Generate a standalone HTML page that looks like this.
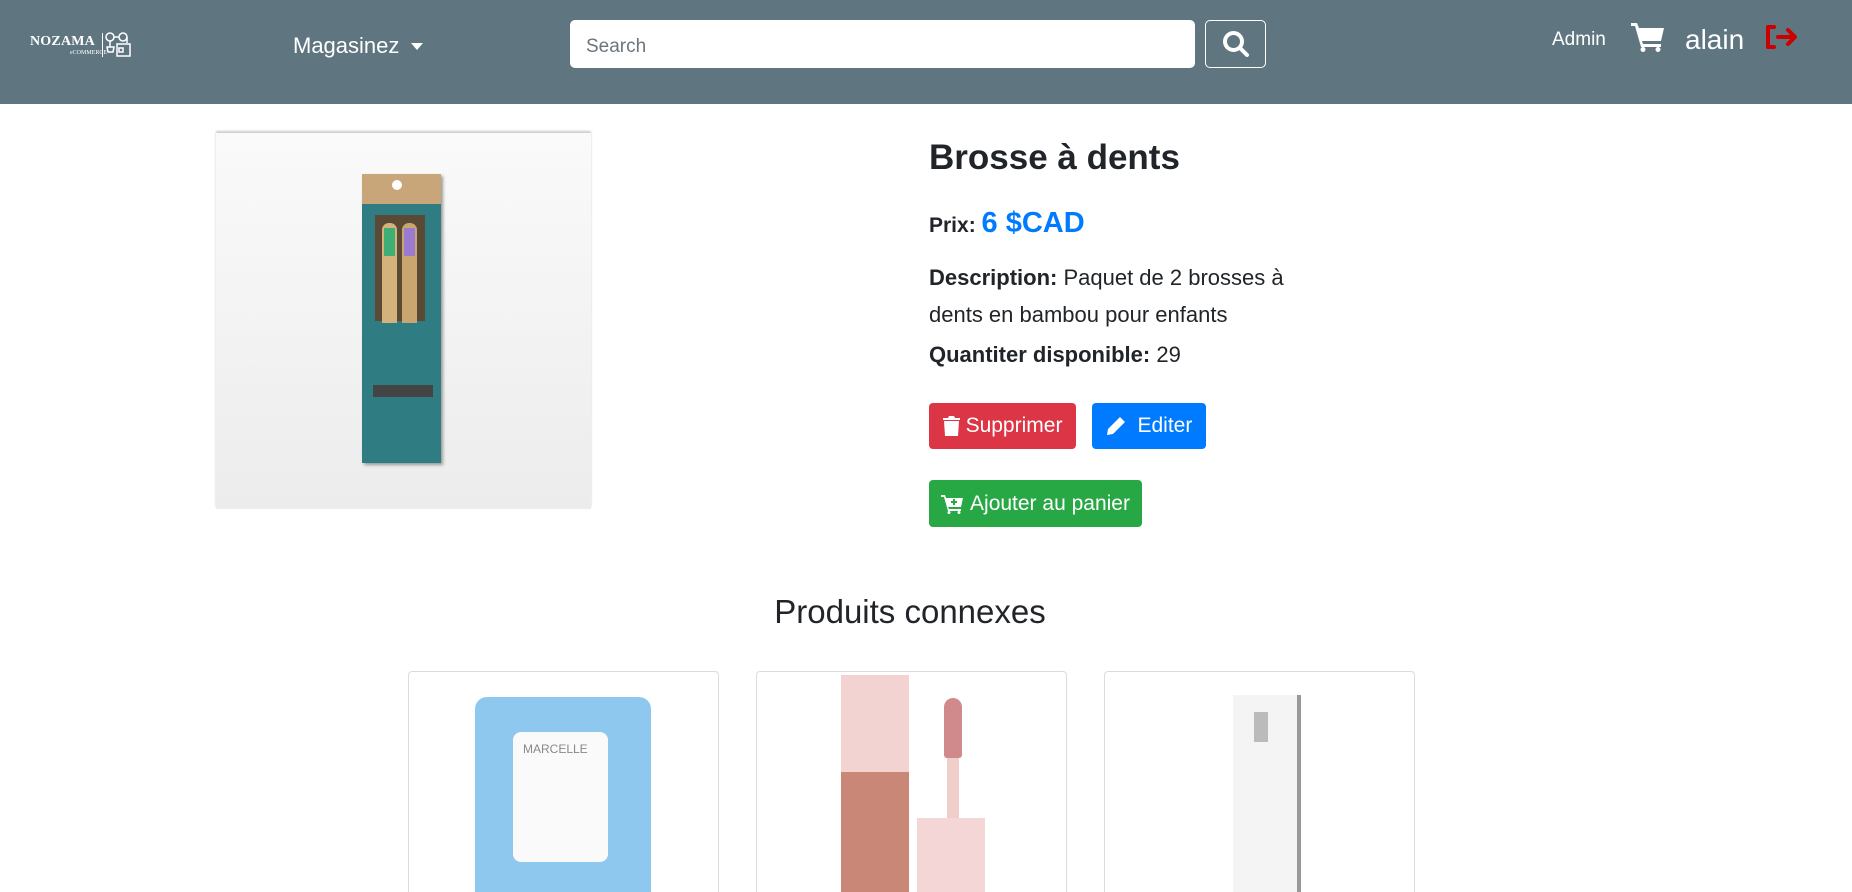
<!DOCTYPE html>
<html><head><meta charset="utf-8"><style>
*{box-sizing:border-box;margin:0;padding:0}
html,body{width:1852px;height:892px;overflow:hidden}
body{background:#fff;font-family:"Segoe UI","Liberation Sans",sans-serif;color:#212529;position:relative}
.a{position:absolute}
.nav{left:0;top:0;width:1852px;height:104px;background:#5f7680}
.w{color:#fff}
.btn{position:absolute;border-radius:4px;color:#fff;font-size:21px;display:flex;align-items:center;justify-content:center;gap:6px}
.card{position:absolute;top:671px;width:311px;height:221px;border:1px solid #dcdcdc;border-bottom:none;border-radius:4px 4px 0 0;overflow:hidden;background:#fff}
</style></head><body>
<div class="a nav"></div>
<div class="a w" style="left:30px;top:34px;font-family:'Liberation Serif',serif;font-weight:bold;font-size:14px;letter-spacing:0.2px">NOZAMA</div>
<div class="a w" style="left:70px;top:50px;font-family:'Liberation Serif',serif;font-size:6px">eCOMMERCE</div>
<div class="a" style="left:102px;top:33px;width:1px;height:24px;background:#fff"></div>
<svg class="a" style="left:105px;top:32px" width="27" height="26" viewBox="0 0 27 26" fill="none" stroke="#fff" stroke-width="1.5"><circle cx="5" cy="5" r="4"/><circle cx="18" cy="5" r="4"/><path d="M9 5h5M22 5v6M5 9v6M2 15h7l-1 5H3zM12 12h13v12H12zM14 16h4v4h-4z"/></svg>
<div class="a w" style="left:293px;top:33px;font-size:22px">Magasinez</div>
<div class="a" style="left:411px;top:43px;border-left:6px solid transparent;border-right:6px solid transparent;border-top:7px solid #fff"></div>
<div class="a" style="left:570px;top:20px;width:625px;height:48px;background:#fff;border-radius:5px;font-size:19px;color:#6c757d;padding:17px 0 0 16px;line-height:1">Search</div>
<div class="a" style="left:1205px;top:20px;width:61px;height:48px;border:1px solid #fff;border-radius:5px"></div>
<svg class="a" style="left:1222px;top:30px" width="28" height="28" viewBox="0 0 28 28" fill="none" stroke="#fff" stroke-width="4"><circle cx="11.5" cy="11.5" r="8.5"/><path d="M18 18l7 7" stroke-linecap="round"/></svg>
<div class="a w" style="left:1552px;top:29px;font-size:19px">Admin</div>
<svg class="a" style="left:1631px;top:22px" width="34" height="30" viewBox="0 0 34 30" fill="#fff"><path d="M0 1h6l2 5h25l-3 13H11l1 3h18v3H10L4 4H0z"/><circle cx="12" cy="27.5" r="2.5"/><circle cx="27" cy="27.5" r="2.5"/></svg>
<div class="a w" style="left:1685px;top:24px;font-size:28px">alain</div>
<svg class="a" style="left:1765px;top:24px" width="32" height="26" viewBox="0 0 32 26" fill="none" stroke="#cc0000" stroke-width="4" stroke-linecap="round" stroke-linejoin="round"><path d="M9 3H3v20h6M13 13h16M23 6l7 7-7 7"/></svg>

<div class="a" style="left:216px;top:133px;width:375px;height:376px;background:linear-gradient(#fafafa,#ececec);box-shadow:0 -2px 2px #ccc"></div>
<div class="a" style="left:362px;top:174px;width:79px;height:289px;background:#2f7c83;box-shadow:2px 2px 3px #999"></div>
<div class="a" style="left:362px;top:174px;width:79px;height:30px;background:#c9a57a"></div>
<div class="a" style="left:392px;top:180px;width:10px;height:10px;border-radius:50%;background:#fff"></div>
<div class="a" style="left:375px;top:215px;width:50px;height:106px;background:#5a4a35"></div>
<div class="a" style="left:382px;top:223px;width:15px;height:100px;background:#d3b27c;border-radius:7px 7px 0 0"></div>
<div class="a" style="left:384px;top:228px;width:11px;height:28px;background:#3fae75"></div>
<div class="a" style="left:402px;top:223px;width:15px;height:100px;background:#c9a670;border-radius:7px 7px 0 0"></div>
<div class="a" style="left:404px;top:228px;width:11px;height:28px;background:#9a7bd0"></div>
<div class="a" style="left:373px;top:385px;width:60px;height:12px;background:#444"></div>

<div class="a" style="left:929px;top:138px;font-size:35px;font-weight:bold">Brosse à dents</div>
<div class="a" style="left:929px;top:207px;font-size:21px;font-weight:bold">Prix: <span style="color:#007bff;font-size:29px">6 $CAD</span></div>
<div class="a" style="left:929px;top:259px;font-size:22px;line-height:37px">
<b>Description:</b> Paquet de 2 brosses à<br>dents en bambou pour enfants</div>
<div class="a" style="left:929px;top:342px;font-size:22px"><b>Quantiter disponible:</b> 29</div>
<div class="btn" style="left:929px;top:403px;width:147px;height:46px;background:#dc3545"><svg width="17" height="20" viewBox="0 0 17 20" fill="#fff"><path d="M0 2h5l1-2h5l1 2h5v2H0zM1 5h15l-1 15H2z"/></svg>Supprimer</div>
<div class="btn" style="left:1092px;top:403px;width:114px;height:46px;background:#007bff"><svg width="20" height="20" viewBox="0 0 20 20" fill="#fff"><path d="M14 1l5 5-12 12-6 1 1-6zM12 5l3 3"/></svg>&nbsp;Editer</div>
<div class="btn" style="left:929px;top:480px;width:213px;height:47px;background:#28a745"><svg width="23" height="20" viewBox="0 0 23 20" fill="#fff"><path d="M0 1h4l1 3h17l-2 9H7l1 2h12v2H7L3 3H0z"/><circle cx="8" cy="18.5" r="1.5"/><circle cx="18" cy="18.5" r="1.5"/><path d="M12 5h2v2h2v2h-2v2h-2V9h-2V7h2z" fill="#28a745"/></svg>Ajouter au panier</div>

<div class="a" style="left:0;width:1820px;top:593px;text-align:center;font-size:33px">Produits connexes</div>

<div class="card" style="left:408px">
<div class="a" style="left:66px;top:25px;width:176px;height:196px;background:#8fc8ef;border-radius:12px 12px 0 0"></div>
<div class="a" style="left:104px;top:60px;width:95px;height:130px;background:#fafafa;border-radius:8px"></div>
<div class="a" style="left:114px;top:70px;font-size:12px;color:#888">MARCELLE</div>
</div>
<div class="card" style="left:756px">
<div class="a" style="left:84px;top:3px;width:68px;height:218px;background:#f3d2d2"></div>
<div class="a" style="left:84px;top:100px;width:68px;height:121px;background:#c98877"></div>
<div class="a" style="left:187px;top:26px;width:18px;height:60px;background:#d08a8c;border-radius:9px 9px 3px 3px"></div>
<div class="a" style="left:190px;top:86px;width:12px;height:60px;background:#f0cfcb"></div>
<div class="a" style="left:160px;top:146px;width:68px;height:75px;background:#f4d6d6"></div>
</div>
<div class="card" style="left:1104px">
<div class="a" style="left:128px;top:23px;width:64px;height:198px;background:#f4f4f4;box-shadow:4px 0 0 #999"></div>
<div class="a" style="left:149px;top:40px;width:14px;height:30px;background:#bbb"></div>
</div>
</body></html>
